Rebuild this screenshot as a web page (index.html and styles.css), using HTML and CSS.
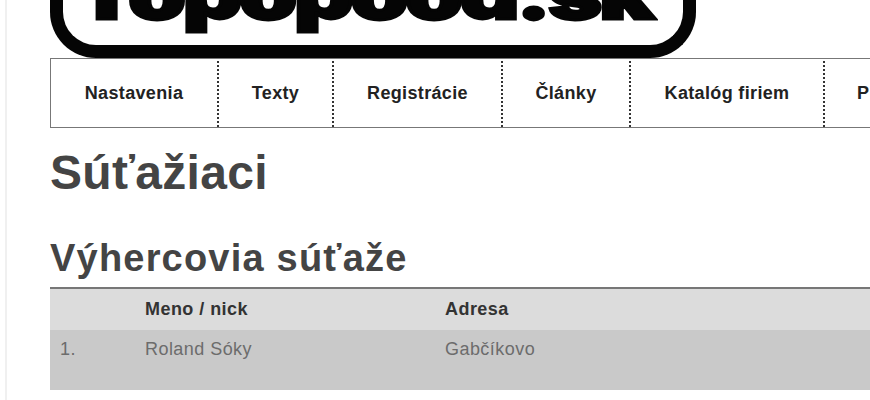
FILE: index.html
```html
<!DOCTYPE html>
<html lang="sk">
<head>
    <meta charset="UTF-8">
    <meta name="viewport" content="width=device-width, initial-scale=1.0">
    <title>Súťažiaci</title>
    <link rel="stylesheet" href="styles.css">
</head>
<body>

<div class="page">
    <div class="logo"><span class="logo-text">Topopood.sk</span></div>

    <ul class="menu">
        <li class="w-nastavenia"><a href="#">Nastavenia</a></li>
        <li class="w-texty"><a href="#">Texty</a></li>
        <li class="w-registracie"><a href="#">Registrácie</a></li>
        <li class="w-clanky"><a href="#">Články</a></li>
        <li class="w-katalog"><a href="#">Katalóg firiem</a></li>
        <li class="w-last"><a href="#">P</a></li>
    </ul>

    <h1>Súťažiaci</h1>
    <h2>Výhercovia súťaže</h2>

    <table class="winners">
        <thead>
            <tr>
                <th class="col-num"></th>
                <th class="col-name">Meno / nick</th>
                <th>Adresa</th>
            </tr>
        </thead>
        <tbody>
            <tr>
                <td class="num">1.</td>
                <td>Roland Sóky</td>
                <td>Gabčíkovo</td>
            </tr>
        </tbody>
    </table>
</div>

</body>
</html>
```

FILE: styles.css
```css
html, body {
    margin: 0;
    height: 400px;
    overflow: hidden;
    background-color: #fff;
}
body {
    font-family: "Liberation Sans", Arial, sans-serif;
    color: #444;
}
.page {
    margin-left: 5px;
    height: 400px;
    padding-left: 43px;
    border-left: 2px solid #f0f0f0;
    box-sizing: border-box;
    width: 865px;
    overflow: hidden;
}
.logo {
    width: 646px;
    height: 58px;
    box-sizing: border-box;
    border: 13px solid #050505;
    border-top: none;
    border-radius: 0 0 46px 46px;
    overflow: hidden;
    line-height: 0;
    padding-left: 12px;
}
.logo-text {
    display: inline-block;
    margin-top: -55px;
    line-height: 100px;
    font-family: Inter, "Liberation Sans", sans-serif;
    font-weight: 900;
    font-size: 95px;
    letter-spacing: -3px;
    color: #050505;
    white-space: nowrap;
    -webkit-text-stroke: 4px #050505;
    transform: scale(0.97, 0.7);
    transform-origin: left center;
}
.menu {
    display: flex;
    list-style: none;
    margin: 0;
    padding: 0;
    height: 70px;
    box-sizing: border-box;
    border: 1px solid #777;
    border-right: none;
    font-size: 18px;
    letter-spacing: 0.35px;
    font-weight: bold;
    overflow: hidden;
}
.menu li {
    display: flex;
    flex-shrink: 0;
    align-items: center;
    justify-content: center;
    box-sizing: border-box;
    border-right: 2px dotted #333;
    margin-top: 2px;
    padding-bottom: 2px;
}
.menu a {
    color: #222;
    text-decoration: none;
}
.w-nastavenia { width: 168px; }
.w-texty { width: 115px; }
.w-registracie { width: 169px; }
.w-clanky { width: 128px; }
.w-katalog { width: 194px; }
.menu .w-last {
    width: 50px;
    border-right: none;
    justify-content: flex-start;
    padding-left: 32px;
}
h1 {
    margin: 20px 0 0;
    font-size: 48px;
    letter-spacing: 0.3px;
    line-height: 50px;
    color: #444;
}
h2 {
    margin: 40px 0 0;
    font-size: 38px;
    letter-spacing: 1.2px;
    line-height: 40px;
    color: #444;
}
.winners {
    width: 100%;
    margin-top: 9px;
    border-collapse: collapse;
    font-size: 18px;
    letter-spacing: 0.45px;
}
.winners thead tr {
    height: 42px;
    background-color: #dcdcdc;
    border-top: 2px solid #777;
}
.winners th {
    padding: 0;
    text-align: left;
    color: #333;
}
.winners tbody tr {
    height: 60px;
    background-color: #c9c9c9;
}
.winners td {
    padding: 9px 0 0;
    vertical-align: top;
    color: #6c6c6c;
}
.winners .num { padding-left: 10px; }
.col-num { width: 95px; }
.col-name { width: 300px; }
```
